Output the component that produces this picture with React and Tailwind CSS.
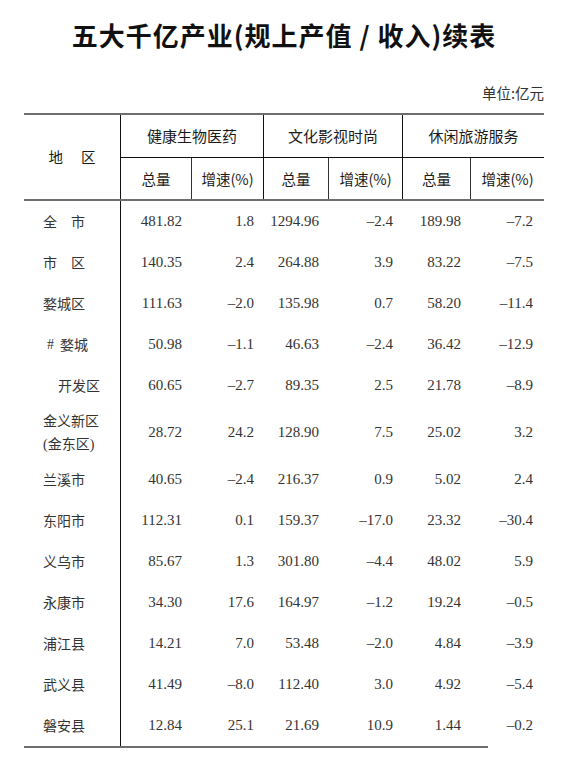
import React from 'react'

const cjk = "font-['Noto_Sans_CJK_SC',sans-serif]"
const num = "font-['Liberation_Serif','Noto_Sans_CJK_SC',serif]"

const rows = [
  { name: <>全<span className="ml-[14px]">市</span></>, v: ['481.82', '1.8', '1294.96', '–2.4', '189.98', '–7.2'] },
  { name: <>市<span className="ml-[14px]">区</span></>, v: ['140.35', '2.4', '264.88', '3.9', '83.22', '–7.5'] },
  { name: '婺城区', v: ['111.63', '–2.0', '135.98', '0.7', '58.20', '–11.4'] },
  {
    name: <><span className={num}>#</span><span className="ml-[6px]">婺城</span></>,
    pad: 'pl-[23px]',
    v: ['50.98', '–1.1', '46.63', '–2.4', '36.42', '–12.9'],
  },
  { name: '开发区', pad: 'pl-[34px]', v: ['60.65', '–2.7', '89.35', '2.5', '21.78', '–8.9'] },
  {
    name: (
      <span className="flex flex-col leading-[23px]">
        <span>金义新区</span>
        <span>
          <span className={num}>(</span>金东区<span className={num}>)</span>
        </span>
      </span>
    ),
    tall: true,
    v: ['28.72', '24.2', '128.90', '7.5', '25.02', '3.2'],
  },
  { name: '兰溪市', v: ['40.65', '–2.4', '216.37', '0.9', '5.02', '2.4'] },
  { name: '东阳市', v: ['112.31', '0.1', '159.37', '–17.0', '23.32', '–30.4'] },
  { name: '义乌市', v: ['85.67', '1.3', '301.80', '–4.4', '48.02', '5.9'] },
  { name: '永康市', v: ['34.30', '17.6', '164.97', '–1.2', '19.24', '–0.5'] },
  { name: '浦江县', v: ['14.21', '7.0', '53.48', '–2.0', '4.84', '–3.9'] },
  { name: '武义县', v: ['41.49', '–8.0', '112.40', '3.0', '4.92', '–5.4'] },
  { name: '磐安县', v: ['12.84', '25.1', '21.69', '10.9', '1.44', '–0.2'] },
]

const cols = 'grid grid-cols-[97px_71px_72px_65px_74px_68px_73px]'

function App() {
  return (
    <div className="min-h-screen bg-white">
      <div className="ml-[24px] w-[520px] pt-[20px]">
        <h1 className={`${cjk} text-center text-[26px] leading-[30px] font-bold tracking-[1px] text-[#111]`}>
          五大千亿产业(规上产值 / 收入)续表
        </h1>
        <div className={`${cjk} mt-[34px] text-right text-[14.5px] leading-[18px] text-[#333]`}>单位:亿元</div>

        <div
          className={`${cols} ${cjk} mt-[11px] grid-rows-[43px_41px] border-t-2 border-b-2 border-[#6e6e6e] text-[#1a1a1a]`}
        >
          <div className="row-span-2 flex items-center justify-center border-r border-[#111] text-[14.5px]">
            地<span className="ml-[18px]">区</span>
          </div>
          <div className="col-span-2 flex items-center justify-center border-r border-b border-[#111] text-[15px]">
            健康生物医药
          </div>
          <div className="col-span-2 flex items-center justify-center border-r border-b border-[#111] text-[15px]">
            文化影视时尚
          </div>
          <div className="col-span-2 flex items-center justify-center border-b border-[#111] text-[15px]">
            休闲旅游服务
          </div>
          {[0, 1, 2].map((i) => (
            <React.Fragment key={i}>
              <div className="flex items-center justify-center border-r border-[#333] text-[14.5px]">总量</div>
              <div
                className={`flex items-center justify-center text-[14.5px] ${i < 2 ? 'border-r border-[#111]' : ''}`}
              >
                增速(%)
              </div>
            </React.Fragment>
          ))}
        </div>

        <div>
          {rows.map((r, i) => (
            <div key={i} className={`${cols} ${r.tall ? 'h-[53px]' : 'h-[41px]'}`}>
              <div
                className={`${cjk} flex items-center border-r border-[#111] text-[14px] text-[#333] ${r.pad || 'pl-[19px]'}`}
              >
                {r.name}
              </div>
              {r.v.map((x, j) => (
                <div
                  key={j}
                  className={`${num} flex items-center justify-end text-[15px] text-[#333] ${j === 5 ? 'pr-[11px]' : 'pr-[10px]'}`}
                >
                  {x}
                </div>
              ))}
            </div>
          ))}
        </div>
        <div className="h-[2px] w-[464px] bg-[#6e6e6e]" />
      </div>
    </div>
  )
}

export default App
